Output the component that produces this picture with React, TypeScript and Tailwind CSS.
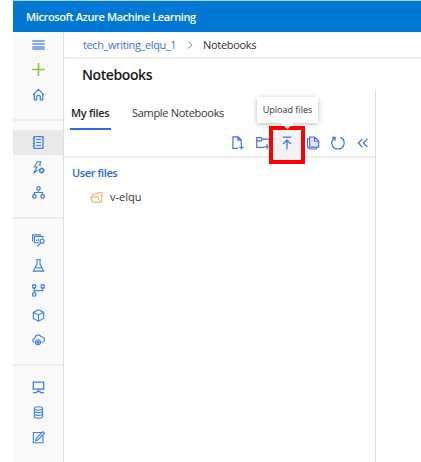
import type { ReactNode } from "react";

function Icon({ children, size = 13, className = "text-[#3f7fe0]" }: { children: ReactNode; size?: number; className?: string }) {
  return (
    <svg width={size} height={size} viewBox="0 0 13 13" fill="none" stroke="currentColor" strokeWidth="1.1" className={`shrink-0 ${className}`}>
      {children}
    </svg>
  );
}

function NavItem({ children, active = false, color }: { children: ReactNode; active?: boolean; color?: string }) {
  return (
    <div className={`flex h-[25px] w-full shrink-0 items-center justify-center ${active ? "bg-[#e9e9e9]" : ""}`}>
      <Icon className={color}>{children}</Icon>
    </div>
  );
}

function Sidebar() {
  return (
    <nav className="flex w-[51px] shrink-0 flex-col border-r border-[#dedede] bg-[#f9f9f9]">
      <NavItem><path d="M.3 3h12.4M.3 6h12.4M.3 9h12.4M.3 11h12.4" strokeWidth="1.3" opacity=".85" /></NavItem>
      <NavItem color="text-[#8cc84b]"><path d="M6.5 0v13M0 6.5h13" strokeWidth="1.7" /></NavItem>
      <NavItem><path d="M1 6.8 6.5 1.3 12 6.8M2.3 5.7v6.2h2.4V8.2q1.8-1.8 3.6 0v3.7h2.4V5.7" strokeWidth="1.2" /></NavItem>
      <div className="mt-[12px] mb-[9px] h-[2px] shrink-0 bg-[#ebebeb]" />
      <NavItem active><path d="M2 .7h9v11.6H2z" strokeWidth="1.3" /><path d="M4.2 3.5h4.9M4.2 6.5h4.9M4.2 9.5h4.9M.8 2.5h1.8M.8 5h1.8M.8 7.5h1.8M.8 10h1.8" /></NavItem>
      <NavItem><path d="M9 .7H5.3L2.5 6h2.7L1.5 12.2 5.5 9M9 .7 7.3 4.2H9" /><circle cx="9.6" cy="9.4" r="2" strokeWidth="1.5" /><path d="M9.6 6.5v1M9.6 11.4v1M6.5 9.4h1M11.7 9.4h1" /></NavItem>
      <NavItem><circle cx="6.5" cy="2.4" r="1.7" strokeWidth="1.3" /><circle cx="2.4" cy="10.4" r="1.7" strokeWidth="1.3" /><circle cx="10.6" cy="10.4" r="1.7" strokeWidth="1.3" /><path d="M6.5 4.2v2.3M2.4 8.6V6.5h8.2v2.1" /></NavItem>
      <div className="mt-[12px] mb-[9px] h-[2px] shrink-0 bg-[#ebebeb]" />
      <NavItem><path d="M7.2 8.7H2.4V2.4h8.5v2M.6 7.4V.7h8.5" /><path d="M4.5 7V5.7M6.4 7V4.5" /><circle cx="10.1" cy="7.2" r="2" /><path d="m8.6 8.8-3.3 3.5" /></NavItem>
      <NavItem><path d="M4 .8h5M5 1v4L1.3 12.1h10.4L8 5V1M3.3 8.8h6.4" /></NavItem>
      <NavItem><path d="M.7.9h3v3h-3zM9.2.9h3v3h-3zM.7 9h3v3h-3zM2.2 4v5M2.2 6.7h8.5V4" strokeWidth="1.2" /></NavItem>
      <NavItem><path d="m6.5.8 5.2 2.6v6.1l-5.2 2.7-5.2-2.7V3.4zM1.3 3.4 6.5 6l5.2-2.6M6.5 6v6" /></NavItem>
      <NavItem><path d="M2.8 8.3C-.1 8-.1 4.7 2.8 4.5 3 .1 8 0 9 2.8c4.2-.1 4.6 5.4.7 5.7" /><circle cx="6" cy="8.2" r="2.5" /><circle cx="6" cy="8.2" r="1" fill="currentColor" /></NavItem>
      <div className="mt-[11px] mb-[9px] h-[2px] shrink-0 bg-[#ebebeb]" />
      <NavItem><path d="M1.3 1.2h10.4v6.9H1.3zM6.5 8.2v2.3M1 11.6h3.2l1-1h2.6l1 1H12" strokeWidth="1.3" /></NavItem>
      <NavItem><ellipse cx="6.5" cy="2.5" rx="4.1" ry="1.7" /><path d="M2.4 2.5v8c0 2.2 8.2 2.2 8.2 0v-8M2.4 5c0 2.2 8.2 2.2 8.2 0M2.4 7.7c0 2.2 8.2 2.2 8.2 0" /></NavItem>
      <NavItem><path d="M10.2 1.5H1.3v10.3H11V4M3.7 9.7l.7-2.6L10.8.7l1.5 1.5-6.2 6.5z" /></NavItem>
    </nav>
  );
}

function Toolbar() {
  return (
    <div className="flex h-[28px] items-center border-b-2 border-[#ededed] pl-[167px]">
      <Icon size={14} className="text-[#406fda]"><path d="M6.5 11.5H1.8V.8h4.7l3 3v4.5M6.5.8v3h3M9.7 8.5v4M7.7 10.5h4" /></Icon>
      <Icon size={14} className="ml-[11px] text-[#406fda]"><path d="M8 10.5H.7v-9h4l1.2 1.4h6.4v5M.7 4.5h4.2l1-1.6M10.3 7.5v5M7.8 10h5" /></Icon>
      <div className="relative mt-[4px] ml-[-1px] flex h-[38px] w-[36px] shrink-0 items-center justify-center border-[4px] border-[#ff0000] bg-[#f2f2f2] pb-[4px]">
        <Icon size={14} className="text-[#406fda]"><path d="M2.5 1h8M6.5 12.5V4M3 7.4l3.5-3.6L10 7.4" /></Icon>
        <div className="absolute -top-[33px] left-[-16px] flex h-[26px] w-[61px] items-center justify-center bg-white shadow-[0_1px_5px_rgba(0,0,0,0.28)]">
          <span className="z-10 whitespace-nowrap text-[9px] text-[#333]">Upload files</span>
          <div className="absolute bottom-[-4px] left-[25px] size-[11px] rotate-45 bg-white" />
        </div>
      </div>
      <Icon size={14} className="ml-px text-[#406fda]"><path d="M3.2 2.6H1.4v7.9l2 1.6h6.4V10.8" /><path d="M3.4.9h4.7l3.7 3.9v5.6H3.4zM7.9.9v4h3.9" fill="#e1e9f9" /></Icon>
      <Icon size={14} className="ml-[11px] text-[#406fda]"><path d="M.8 1.3h3v3M3.5 1.8C-1 4.5.2 12 6.5 12 13 12 14.2 3.6 8.7 1.3" /></Icon>
      <Icon size={14} className="ml-[11px] text-[#406fda]"><path d="M6 2.7 2.2 6.5 6 10.3M10.7 2.7 6.9 6.5l3.8 3.8" /></Icon>
    </div>
  );
}

export default function App() {
  return (
    <div className="h-[462px] w-[421px] overflow-hidden bg-white pl-[13px] font-['Open_Sans','Noto_Sans',sans-serif] text-[#333]">
      <header className="flex h-[32px] items-center border-t border-[#b5d5e9] bg-[#0078d4] pl-[13px] pt-[2px]">
        <span className="whitespace-nowrap text-[11px] font-semibold tracking-[-0.37px] text-white">Microsoft Azure Machine Learning</span>
      </header>
      <div className="flex h-[430px]">
        <Sidebar />
        <main className="flex min-w-0 flex-1 flex-col">
          <div className="flex h-[27px] items-center border-b-2 border-[#eee] pl-[19px] pt-px text-[11px] tracking-[-0.38px]">
            <span className="w-[94px] whitespace-nowrap text-[#3c71dd]">tech_writing_elqu_1</span>
            <svg width="6" height="8" viewBox="0 0 6 8" className="ml-[10px] shrink-0" fill="none" stroke="#8b8b8b"><path d="m1 .5 4 3.5-4 3.5" /></svg>
            <span className="ml-[10px] tracking-[-0.3px]">Notebooks</span>
          </div>
          <h1 className="flex h-[30px] items-center pl-[18px] text-[14px] font-semibold tracking-[-0.4px] text-[#171717]">Notebooks</h1>
          <section className="flex w-[312px] flex-1 flex-col border-r border-[#dedede]">
            <div className="flex h-[41px] pl-[6px] text-[11px]">
              <div className="flex w-[41px] flex-col border-b-2 border-[#2e6ce0] pt-[16px] pl-px font-semibold tracking-[-0.3px] text-[#252525]"><span className="whitespace-nowrap">My files</span></div>
              <div className="ml-[21px] whitespace-nowrap pt-[16px] tracking-[-0.3px]">Sample Notebooks</div>
            </div>
            <Toolbar />
            <div className="flex flex-col text-[11px]">
              <div className="flex h-[30px] items-center pl-[8px] font-semibold tracking-[-0.4px] text-[#2868d8]">User files</div>
              <div className="flex h-[18px] items-center pl-[26px]">
                <Icon className="text-[#e4b16c]"><path d="M9.8 11.2H3L.7 6h7.1l2 5.2h2V1.8H7.5L6.2 3.2H3V6" /></Icon>
                <span className="ml-[7px]">v-elqu</span>
              </div>
            </div>
          </section>
        </main>
      </div>
    </div>
  );
}
